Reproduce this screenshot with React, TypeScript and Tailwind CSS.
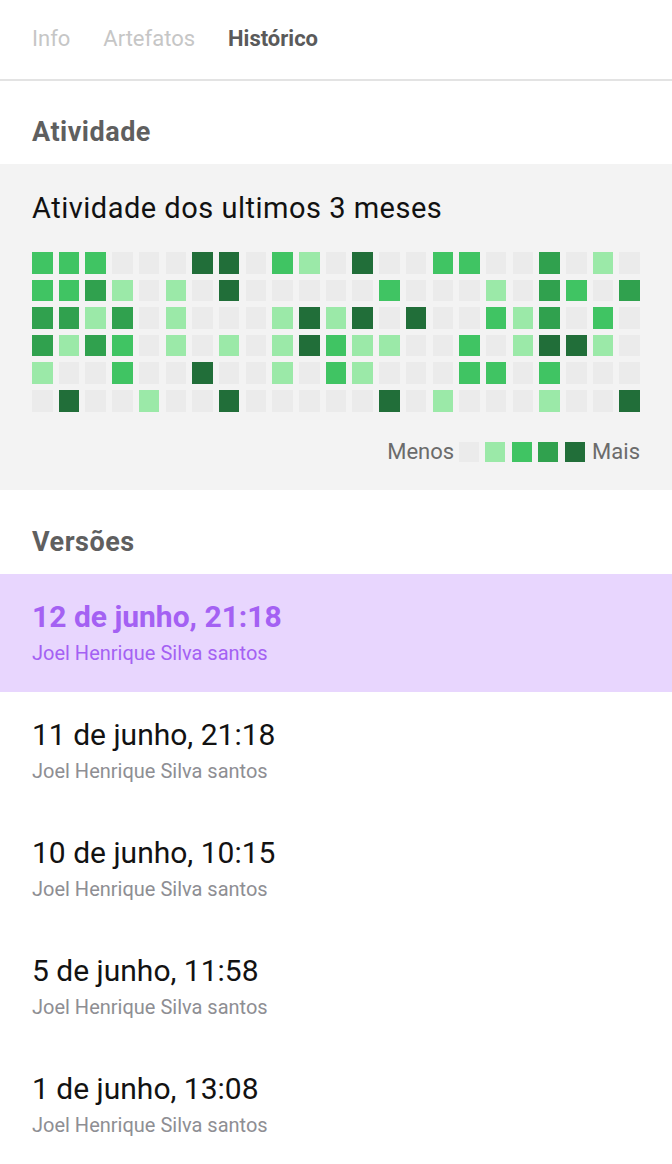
import React from 'react';

const levels = ['bg-[#ebebeb]', 'bg-[#9be9a8]', 'bg-[#40c463]', 'bg-[#30a14e]', 'bg-[#216e39]'];

const activity: number[][] = [
  [2, 2, 2, 0, 0, 0, 4, 4, 0, 2, 1, 0, 4, 0, 0, 2, 2, 0, 0, 3, 0, 1, 0],
  [2, 2, 3, 1, 0, 1, 0, 4, 0, 0, 0, 0, 0, 2, 0, 0, 0, 1, 0, 3, 2, 0, 3],
  [3, 3, 1, 3, 0, 1, 0, 0, 0, 1, 4, 1, 4, 0, 4, 0, 0, 2, 1, 3, 0, 2, 0],
  [3, 1, 3, 2, 0, 1, 0, 1, 0, 1, 4, 2, 1, 1, 0, 0, 2, 0, 1, 4, 4, 1, 0],
  [1, 0, 0, 2, 0, 0, 4, 0, 0, 1, 0, 2, 1, 0, 0, 0, 2, 2, 0, 2, 0, 0, 0],
  [0, 4, 0, 0, 1, 0, 0, 4, 0, 0, 0, 0, 0, 4, 0, 1, 0, 0, 0, 1, 0, 0, 4],
];

const versions = [
  { date: '12 de junho, 21:18', author: 'Joel Henrique Silva santos', active: true },
  { date: '11 de junho, 21:18', author: 'Joel Henrique Silva santos' },
  { date: '10 de junho, 10:15', author: 'Joel Henrique Silva santos' },
  { date: '5 de junho, 11:58', author: 'Joel Henrique Silva santos' },
  { date: '1 de junho, 13:08', author: 'Joel Henrique Silva santos' },
];

export default function App() {
  return (
    <div className="min-h-screen bg-white font-['Roboto',sans-serif]">
      {/* Tabs */}
      <div className="flex gap-[33px] px-8 h-[81px] pb-[3px] items-center border-b-2 border-[#e3e3e3] text-[22px]">
        <span className="text-[#c6c6c6]">Info</span>
        <span className="text-[#c6c6c6]">Artefatos</span>
        <span className="font-bold text-[#5a5a5a]">Histórico</span>
      </div>

      {/* Atividade */}
      <h2 className="px-8 h-[83px] flex items-center pt-[19px] text-[27px] tracking-[0.5px] font-bold text-[#5f5f5f]">
        Atividade
      </h2>
      <div className="bg-[#f3f3f3] px-8 pt-[26px] pb-[26px]">
        <p className="text-[29px] leading-[36px] tracking-[0.5px] text-[#111]">Atividade dos ultimos 3 meses</p>
        <div className="mt-[26px] flex flex-col gap-y-[6px]">
          {activity.map((row, r) => (
            <div key={r} className="grid grid-cols-[repeat(23,minmax(0,1fr))] gap-x-[6.2px]">
              {row.map((v, c) => (
                <div key={c} className={`h-[21.6px] ${levels[v]}`} />
              ))}
            </div>
          ))}
        </div>
        <div className="mt-[28px] h-[24px] flex items-center justify-end gap-[6.5px] text-[22px] text-[#6b6b6b]">
          <span className="mr-[-2px]">Menos</span>
          {levels.map((l, i) => (
            <div key={i} className={`w-[20px] h-[20px] ${l}`} />
          ))}
          <span className="ml-[1px]">Mais</span>
        </div>
      </div>

      {/* Versões */}
      <h2 className="px-8 h-[84px] flex items-center pt-[21px] text-[27px] tracking-[0.5px] font-bold text-[#5f5f5f]">
        Versões
      </h2>
      <div className="flex flex-col">
        {versions.map((v, i) => (
          <div
            key={i}
            className={`h-[118px] px-8 pt-[25px] ${v.active ? 'bg-[#e8d6fe]' : ''}`}
          >
            <p className={`text-[30px] leading-[36px] ${v.active ? 'font-bold text-[#a461f3]' : 'text-[#121212]'}`}>
              {v.date}
            </p>
            <p className={`mt-[6px] text-[20px] leading-[24px] ${v.active ? 'text-[#a461f3]' : 'text-[#8e8e93]'}`}>
              {v.author}
            </p>
          </div>
        ))}
      </div>
    </div>
  );
}
